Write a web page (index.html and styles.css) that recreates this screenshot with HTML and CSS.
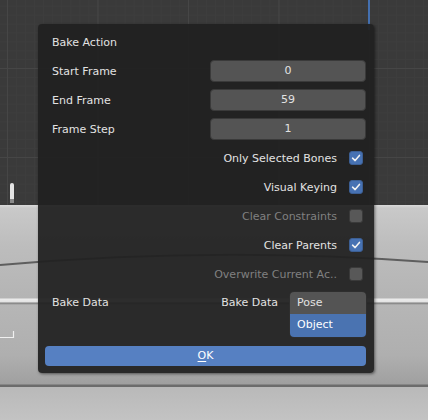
FILE: index.html
```html
<!DOCTYPE html>
<html lang="en">
<head>
    <meta charset="UTF-8">
    <title>Bake Action</title>
    <link rel="stylesheet" href="styles.css">
</head>
<body>
<div class="viewport">
    <div class="grid"></div>
    <div class="object"></div>
    <div class="floor"></div>
    <svg class="props" width="428" height="420" viewBox="0 0 428 420">
        <path d="M0 265 Q214 246 428 262" stroke="#5e5e5e" stroke-width="2" fill="none"/>
        <rect x="10" y="183" width="4" height="20" rx="2" fill="#e4e4e4"/>
        <rect x="10" y="199" width="4" height="4" fill="#8a8a8a"/>
        <path d="M0 337.5 H14 M13.5 331 V338" stroke="#f0f0f0" stroke-width="1.2" fill="none"/>
    </svg>
    <span class="frame-line"></span>

    <div class="dialog">
        <div class="row title">Bake Action</div>
        <div class="row prop"><span class="label">Start Frame</span><span class="field">0</span></div>
        <div class="row prop"><span class="label">End Frame</span><span class="field">59</span></div>
        <div class="row prop"><span class="label">Frame Step</span><span class="field">1</span></div>
        <div class="row check">
            <span class="label">Only Selected Bones</span>
            <span class="box on"><svg viewBox="0 0 14 14"><path d="M3 7.2 L6 10 L11 4"/></svg></span>
        </div>
        <div class="row check">
            <span class="label">Visual Keying</span>
            <span class="box on"><svg viewBox="0 0 14 14"><path d="M3 7.2 L6 10 L11 4"/></svg></span>
        </div>
        <div class="row check off">
            <span class="label">Clear Constraints</span>
            <span class="box"></span>
        </div>
        <div class="row check">
            <span class="label">Clear Parents</span>
            <span class="box on"><svg viewBox="0 0 14 14"><path d="M3 7.2 L6 10 L11 4"/></svg></span>
        </div>
        <div class="row check off">
            <span class="label">Overwrite Current Ac..</span>
            <span class="box"></span>
        </div>
        <div class="row enum">
            <span class="label">Bake Data</span>
            <span class="label-r">Bake Data</span>
            <div class="options">
                <span class="opt">Pose</span>
                <span class="opt sel">Object</span>
            </div>
        </div>
        <div class="ok"><u>O</u>K</div>
    </div>
</div>
</body>
</html>
```

FILE: styles.css
```css
body {
    margin: 0;
    font-family: "DejaVu Sans", "Liberation Sans", sans-serif;
    font-size: 11px;
}

.viewport {
    position: relative;
    width: 428px;
    height: 420px;
    overflow: hidden;
    background: #bcbcbc;
}

.grid {
    height: 205px;
    background-color: #3a3a3a;
    background-image:
        linear-gradient(90deg, #464646 1px, transparent 1px),
        linear-gradient(#464646 1px, transparent 1px),
        linear-gradient(90deg, #3d3d3d 1px, transparent 1px),
        linear-gradient(#3d3d3d 1px, transparent 1px);
    background-size: 90.5px 100%, 100% 89px, 9.05px 100%, 100% 8.9px;
    background-position: 7px 0, 0 68px, 7px 0, 0 68px;
}

.object {
    height: 182px;
    background: linear-gradient(#dadada 0, #c9c9c9 3px, #bdbdbd 40px, #b4b4b4 93px,
        #ececec 94px, #e2e2e2 97px, #7c7c7c 98px, #b6b6b6 100px,
        #afafaf 150px, #a0a0a0 179px, #6c6c6c 180px, #6c6c6c 182px);
}

.floor {
    height: 33px;
    background: linear-gradient(#b9b9b9, #c3c3c3);
}

.props {
    position: absolute;
    left: 0;
    top: 0;
}

.frame-line {
    position: absolute;
    left: 368px;
    top: 0;
    width: 2px;
    height: 30px;
    background: #4470b0;
}

.dialog {
    position: absolute;
    left: 38px;
    top: 24px;
    width: 336px;
    height: 349px;
    box-sizing: border-box;
    padding: 7px 8px 7px 7px;
    display: flex;
    flex-direction: column;
    gap: 7px;
    background: rgba(33, 33, 33, 0.94);
    border-radius: 4px;
    box-shadow: 1px 1px 3px rgba(0, 0, 0, 0.5);
    color: #e2e2e2;
}

.row {
    height: 22px;
    display: flex;
    align-items: center;
}

.row .label {
    padding-left: 7px;
}

.title {
    padding-left: 7px;
}

.title, .row .label {
    white-space: nowrap;
}

.prop .label {
    flex: 1;
}

.field {
    width: 156px;
    height: 22px;
    box-sizing: border-box;
    border: 1px solid #3a3a3a;
    border-radius: 4px;
    background: #545454;
    text-align: center;
    line-height: 20px;
}

.check {
    justify-content: flex-end;
}

.check .label {
    margin-right: 12px;
}

.check.off .label {
    color: #808080;
}

.box {
    width: 14px;
    height: 14px;
    box-sizing: border-box;
    margin-right: 3px;
    border-radius: 3px;
    border: 1px solid #3a3a3a;
    background: #585858;
}

.box.on {
    background: #4772b3;
    border-color: #3c5f94;
}

.box svg {
    display: block;
    width: 12px;
    height: 12px;
}

.box svg path {
    fill: none;
    stroke: #f2f2f2;
    stroke-width: 1.8;
    stroke-linecap: round;
    stroke-linejoin: round;
}

.enum {
    height: 45px;
    align-items: flex-start;
}

.enum .label {
    flex: 1;
    line-height: 22px;
}

.label-r {
    line-height: 22px;
    margin-right: 12px;
}

.options {
    width: 76px;
    display: flex;
    flex-direction: column;
    border-radius: 4px;
    overflow: hidden;
    box-shadow: 0 0 0 1px #2e2e2e;
}

.opt {
    height: 22px;
    line-height: 22px;
    padding-left: 7px;
    background: #545454;
}

.opt.sel {
    height: 23px;
    background: #4a73b1;
    color: #ffffff;
}

.ok {
    height: 20px;
    margin-top: 2px;
    line-height: 20px;
    text-align: center;
    border-radius: 4px;
    background: #5680c2;
    color: #ffffff;
}

.ok u {
    text-underline-offset: 2px;
}
```
